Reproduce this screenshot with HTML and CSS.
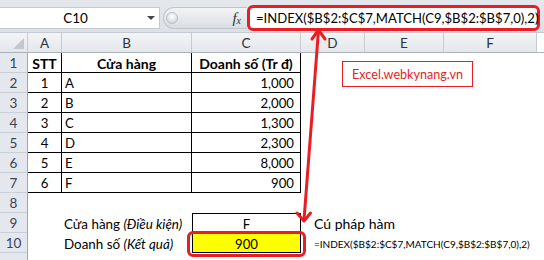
FILE: index.html
```html
<!DOCTYPE html>
<html lang="vi">
<head>
    <meta charset="UTF-8">
    <meta name="viewport" content="width=device-width, initial-scale=1.0">
    <title>INDEX MATCH - Excel</title>
    <link rel="stylesheet" href="styles.css">
</head>
<body>
    <div class="formula-bar">
        <div class="name-box">
            <span class="name">C10</span>
            <span class="dropdown"></span>
        </div>
        <div class="fx-area">
            <span class="knob"></span>
            <span class="fx">f<sub>x</sub></span>
        </div>
        <div class="formula-input">=INDEX($B$2:$C$7,MATCH(C9,$B$2:$B$7,0),2)</div>
    </div>

    <div class="sheet-wrap">
        <div class="sheet">
            <!-- column headers -->
            <div class="corner"></div>
            <div class="col-head">A</div>
            <div class="col-head">B</div>
            <div class="col-head">C</div>
            <div class="col-head">D</div>
            <div class="col-head">E</div>
            <div class="col-head">F</div>
            <div class="col-rest"></div>

            <!-- row 1 -->
            <div class="row-head">1</div>
            <div class="cell data center bold">STT</div>
            <div class="cell data center bold">Cửa hàng</div>
            <div class="cell data center bold">Doanh số (Tr đ)</div>
            <div class="cell span-rest"></div>

            <div class="row-head">2</div>
            <div class="cell data center">1</div>
            <div class="cell data">A</div>
            <div class="cell data right">1,000</div>
            <div class="cell span-rest"></div>

            <div class="row-head">3</div>
            <div class="cell data center">2</div>
            <div class="cell data">B</div>
            <div class="cell data right">2,000</div>
            <div class="cell span-rest"></div>

            <div class="row-head">4</div>
            <div class="cell data center">3</div>
            <div class="cell data">C</div>
            <div class="cell data right">1,300</div>
            <div class="cell span-rest"></div>

            <div class="row-head">5</div>
            <div class="cell data center">4</div>
            <div class="cell data">D</div>
            <div class="cell data right">2,300</div>
            <div class="cell span-rest"></div>

            <div class="row-head">6</div>
            <div class="cell data center">5</div>
            <div class="cell data">E</div>
            <div class="cell data right">8,000</div>
            <div class="cell span-rest"></div>

            <div class="row-head">7</div>
            <div class="cell data center">6</div>
            <div class="cell data">F</div>
            <div class="cell data right">900</div>
            <div class="cell span-rest"></div>

            <div class="row-head">8</div>
            <div class="cell span-all"></div>

            <div class="row-head">9</div>
            <div class="cell"></div>
            <div class="cell label"><span>Cửa hàng <i>(Điều kiện)</i></span></div>
            <div class="cell criteria center">F</div>
            <div class="cell span-rest syntax-title">Cú pháp hàm</div>

            <div class="row-head">10</div>
            <div class="cell"></div>
            <div class="cell label"><span>Doanh số <i>(Kết quả)</i></span></div>
            <div class="cell result center">900</div>
            <div class="cell span-rest syntax">=INDEX($B$2:$C$7,MATCH(C9,$B$2:$B$7,0),2)</div>

            <div class="row-head"></div>
            <div class="cell span-all"></div>
        </div>

        <div class="watermark">Excel.webkynang.vn</div>

        <svg class="arrow" viewBox="0 0 544 227" width="544" height="227">
            <g fill="none" stroke="#ea1c24" stroke-width="3" stroke-linecap="round" stroke-linejoin="round">
                <line x1="318.5" y1="-3" x2="304" y2="187"/>
                <polyline points="312,6 318.5,-3 325,6"/>
                <polyline points="297,180 304,188 310.5,180"/>
            </g>
        </svg>
    </div>
</body>
</html>
```
FILE: styles.css
```css
* {
    margin: 0;
    padding: 0;
    box-sizing: border-box;
}

body {
    font-family: "Lato", "Liberation Sans", sans-serif;
    font-size: 13.2px;
    color: #000;
    background: #fff;
    width: 544px;
    height: 260px;
    overflow: hidden;
}

/* formula bar */

.formula-bar {
    height: 33px;
    display: flex;
    align-items: flex-start;
    background: linear-gradient(#e4e7eb, #dde1e6);
    border-bottom: 1px solid #c3c9d0;
}

.name-box {
    width: 160px;
    height: 22px;
    margin-top: 7px;
    background: #fff;
    border: 1px solid #c5cad1;
    border-left: none;
    display: flex;
    align-items: center;
}

.name {
    flex: 1;
    text-align: center;
    padding-left: 4px;
    font-size: 13.5px;
}

.dropdown {
    width: 0;
    height: 0;
    margin-right: 4px;
    border-left: 4px solid transparent;
    border-right: 4px solid transparent;
    border-top: 4px solid #444;
}

.fx-area {
    width: 84px;
    height: 22px;
    margin-top: 7px;
    margin-left: 3px;
    border: 1px solid #c0c5cc;
    border-right: none;
    border-radius: 11px 0 0 11px;
    background: linear-gradient(#f3f4f6, #dadee3);
    display: flex;
    align-items: center;
    justify-content: space-between;
    padding: 0 6px 0 2px;
}

.knob {
    width: 12px;
    height: 12px;
    border-radius: 50%;
    background: radial-gradient(circle at 50% 35%, #ffffff, #c9cdd3);
    border: 1px solid #b9bec5;
}

.fx {
    font-family: "Liberation Serif", serif;
    font-style: italic;
    font-size: 15px;
    color: #333;
    line-height: 1;
}

.fx sub {
    font-size: 10px;
    vertical-align: -1px;
}

.formula-input {
    width: 293px;
    height: 26px;
    margin-top: 5px;
    background: #fff;
    border: 3px solid #ea1c24;
    border-radius: 6px;
    padding-left: 6px;
    line-height: 20px;
    font-size: 13.1px;
    white-space: nowrap;
}

/* sheet grid */

.sheet-wrap {
    position: relative;
}

.sheet {
    display: grid;
    grid-template-columns: 28px 34px 130px 109px 64px 79px 93px 7px;
    grid-auto-rows: 20px;
}

.corner,
.col-head,
.col-rest {
    background: linear-gradient(#f3f4f6, #e4e7eb);
    border-bottom: 1px solid #a9b1bb;
    border-right: 1px solid #c7ccd3;
}

.corner {
    position: relative;
}

.corner::after {
    content: "";
    position: absolute;
    right: 3px;
    bottom: 3px;
    border-left: 11px solid transparent;
    border-bottom: 11px solid #c4c8ce;
}

.col-rest {
    background: #fff;
    border: none;
    border-bottom: 1px solid #a9b1bb;
}

.col-head {
    display: flex;
    align-items: center;
    justify-content: center;
    color: #2c3340;
    font-size: 13.5px;
}

.row-head {
    grid-column: 1;
    background: #e4e8ee;
    border-bottom: 1px solid #c9cfd7;
    border-right: 1px solid #9ea8b4;
    display: flex;
    align-items: center;
    justify-content: center;
    color: #35445a;
    font-size: 13.5px;
    padding-top: 1px;
}

.cell {
    display: flex;
    align-items: center;
    padding: 1px 3px 0;
    white-space: nowrap;
}

.span-rest {
    grid-column: 5 / 9;
}

.span-all {
    grid-column: 2 / 9;
}

.data {
    border-right: 1px solid #000;
    border-bottom: 1px solid #000;
}

.center {
    justify-content: center;
}

.right {
    justify-content: flex-end;
    padding-right: 6px;
}

.bold {
    font-weight: 700;
    font-size: 14px;
}

.label {
    font-size: 13.4px;
    padding-left: 2px;
}

.criteria {
    border: 1px solid #000;
    border-bottom: none;
}

.result {
    position: relative;
    background: #ffff00;
    border: 1px solid #000;
}

.result::after {
    content: "";
    position: absolute;
    left: -6px;
    right: -6px;
    top: -3px;
    bottom: -5px;
    border: 3px solid #ea1c24;
    border-radius: 6px;
}

.syntax-title {
    padding-left: 13px;
    font-size: 14px;
}

.syntax {
    padding-left: 13px;
    font-size: 10px;
}

/* annotations */

.watermark {
    position: absolute;
    left: 342px;
    top: 28px;
    width: 131px;
    height: 26px;
    border: 1px solid #ea1c24;
    color: #ea1c24;
    font-size: 12.6px;
    display: flex;
    align-items: center;
    justify-content: center;
    background: #fff;
}

.arrow {
    position: absolute;
    left: 0;
    top: 0;
    overflow: visible;
    pointer-events: none;
}
```
